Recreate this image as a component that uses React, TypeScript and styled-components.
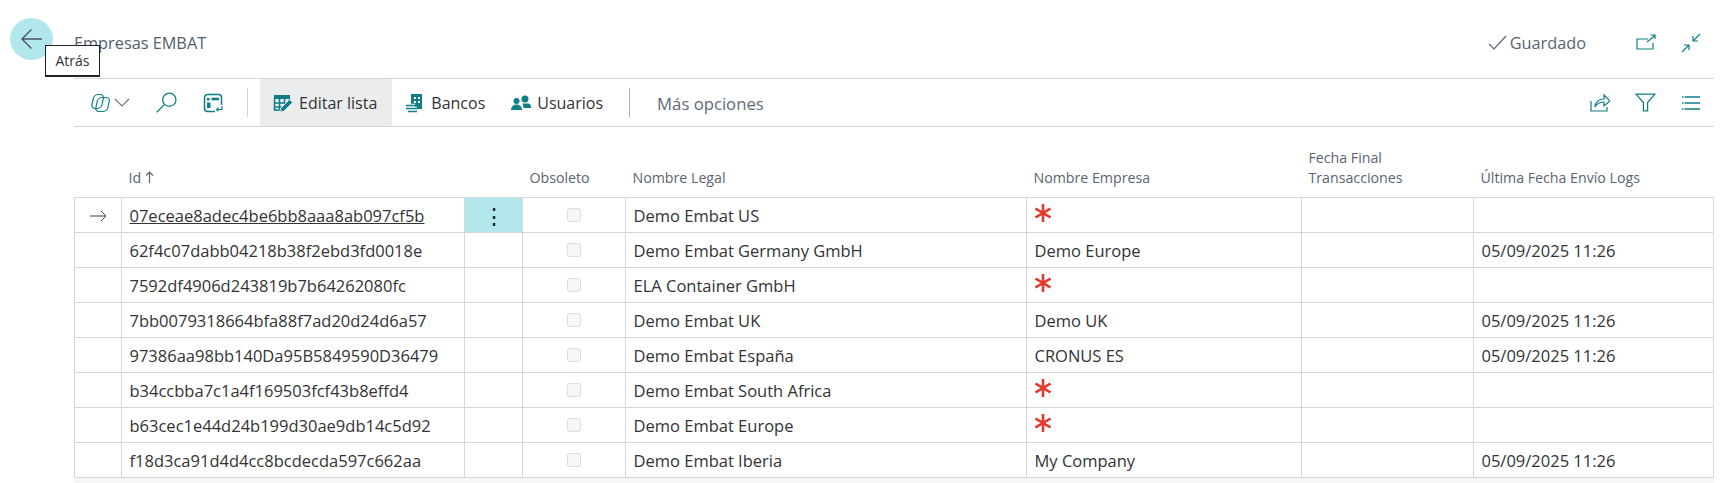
import React from "react";
import styled, { createGlobalStyle } from "styled-components";

const teal = "#0f7f85";

const GlobalStyle = createGlobalStyle`
    html, body {
        margin: 0;
        height: 483px;
        overflow: hidden;
        background: #ffffff;
    }
    body {
        font-family: "Open Sans", "Noto Sans", "Liberation Sans", sans-serif;
    }
`;

const rows = [
    { id: "07eceae8adec4be6bb8aaa8ab097cf5b", legal: "Demo Embat US", company: "", date: "", current: true },
    { id: "62f4c07dabb04218b38f2ebd3fd0018e", legal: "Demo Embat Germany GmbH", company: "Demo Europe", date: "05/09/2025 11:26" },
    { id: "7592df4906d243819b7b64262080fc", legal: "ELA Container GmbH", company: "", date: "" },
    { id: "7bb0079318664bfa88f7ad20d24d6a57", legal: "Demo Embat UK", company: "Demo UK", date: "05/09/2025 11:26" },
    { id: "97386aa98bb140Da95B5849590D36479", legal: "Demo Embat España", company: "CRONUS ES", date: "05/09/2025 11:26" },
    { id: "b34ccbba7c1a4f169503fcf43b8effd4", legal: "Demo Embat South Africa", company: "", date: "" },
    { id: "b63cec1e44d24b199d30ae9db14c5d92", legal: "Demo Embat Europe", company: "", date: "" },
    { id: "f18d3ca91d4d4cc8bcdecda597c662aa", legal: "Demo Embat Iberia", company: "My Company", date: "05/09/2025 11:26" },
];

const Icon = ({ size = 20, children }: { size?: number; children: React.ReactNode }) => (
    <svg width={size} height={size} viewBox="0 0 20 20" fill="none" stroke={teal} strokeWidth="1.2">
        {children}
    </svg>
);

const RequiredMark = () => (
    <svg width="16" height="18" viewBox="0 0 16 18" stroke="#e8372c" strokeWidth="2.6" aria-label="Obligatorio">
        <path d="M8 0v18M0.5 4.5l15 9M15.5 4.5l-15 9" />
    </svg>
);

export default function App() {
    return (
        <Page>
            <GlobalStyle />
            <BackButton aria-label="Atrás">
                <svg width="24" height="24" viewBox="0 0 24 24" fill="none" stroke="#4a5462" strokeWidth="1.4">
                    <path d="M22 12H2.5M11.5 2.5 2 12l9.5 9.5" />
                </svg>
            </BackButton>
            <Tooltip>Atrás</Tooltip>

            <TitleBar>
                <Title>Empresas EMBAT</Title>
                <Saved>
                    <svg width="19" height="16" viewBox="0 0 19 16" fill="none" stroke="#5a6472" strokeWidth="1.2">
                        <path d="M1 9l5 5L18 1" />
                    </svg>
                    Guardado
                </Saved>
                <TitleIcons>
                    <Icon>
                        <path d="M17 10v6H1V6h11" />
                        <path d="M11 9l8-6.5M14.5 2H19v4" />
                    </Icon>
                    <Icon>
                        <path d="M12 8l7-7M12 3v5h5" />
                        <path d="M8 12l-7 7M3 12h5v5" />
                    </Icon>
                </TitleIcons>
            </TitleBar>

            <Toolbar>
                <IconGroup>
                    <CopilotButton>
                        <Icon>
                            <rect x="4.5" y="1.5" width="10" height="14" rx="4" transform="skewX(-12)" />
                            <rect x="9" y="4.5" width="12" height="14" rx="4" transform="skewX(-12)" />
                        </Icon>
                        <svg width="16" height="9" viewBox="0 0 16 9" fill="none" stroke="#6b7480" strokeWidth="1.1">
                            <path d="M1 1l7 7 7-7" />
                        </svg>
                    </CopilotButton>
                    <Icon size={21}>
                        <circle cx="12.7" cy="7.3" r="6.3" />
                        <path d="M8 12L0.7 19.3" />
                    </Icon>
                    <Icon>
                        <path d="M12 18.5H4.5a3 3 0 0 1-3-3v-11a3 3 0 0 1 3-3h11a3 3 0 0 1 3 3V12" strokeWidth="1.5" />
                        <path d="M8.5 6H16" strokeWidth="2.6" />
                        <path d="M4 5h2.5v2.5H4zM4 9.5h3.5V15H4z" fill={teal} stroke="none" />
                        <path d="M19 13v3.5h-5M15.5 14.7L13.7 16.5l1.8 1.8" />
                    </Icon>
                </IconGroup>
                <VerticalRule />
                <ActionActive>
                    <Icon>
                        <path d="M1 2h16v4H1z" fill={teal} stroke="none" />
                        <path d="M1.5 6v11h8M6.5 6v10M11.5 6v5M16.5 6v3M1.5 10h10M1.5 14h7" strokeWidth="1.5" />
                        <path d="M7 19l1-4 8.5-8.5 3 3L11 18z" fill={teal} stroke="#ebecee" strokeWidth="0.8" />
                    </Icon>
                    Editar lista
                </ActionActive>
                <Action>
                    <Icon>
                        <path d="M6 1h11v15H6z" fill={teal} stroke="none" />
                        <path d="M9 5h2M13 5h2M9 9h2M13 9h2" stroke="#fff" strokeWidth="2" />
                        <path d="M1 12.5h9M1 15.5h11M3 18.5h9" stroke="#fff" strokeWidth="3.4" />
                        <path d="M1 12.5h9M1 15.5h11M3 18.5h9" strokeWidth="1.3" />
                    </Icon>
                    Bancos
                </Action>
                <Action>
                    <Icon>
                        <circle cx="5.5" cy="8" r="3" fill={teal} stroke="none" />
                        <circle cx="14" cy="6" r="3.5" fill={teal} stroke="none" />
                        <path d="M0 17c0-3 2-5.5 5.5-5.5s5.5 2.5 5.500 5.500z" fill={teal} stroke="none" />
                        <path d="M11.5 10.5H17c2 0 3 1.5 3 4v.5h-7.500c-.2-1.800-.5-3.200-1-4.500z" fill={teal} stroke="none" />
                    </Icon>
                    Usuarios
                </Action>
                <VerticalRule $dark />
                <MoreOptions>Más opciones</MoreOptions>
                <ToolbarEnd>
                    <Icon>
                        <path d="M1 8v10h16v-4" />
                        <path d="M5 14c0-5 4-8 9-8V2l6 6-6 5V9c-4 0-7 1-9 5z" />
                    </Icon>
                    <Icon size={21}>
                        <path d="M1 2h18l-7 8v8H8v-8z" />
                    </Icon>
                    <Icon>
                        <path d="M1 4h1.5M3.5 4H19M1 10h1.5M3.5 10H19M1 16h1.5M3.5 16H19" strokeWidth="1.4" />
                    </Icon>
                </ToolbarEnd>
            </Toolbar>

            <Table>
                <colgroup>
                    <col width={47} />
                    <col width={343} />
                    <col width={58} />
                    <col width={103} />
                    <col width={401} />
                    <col width={275} />
                    <col width={172} />
                    <col />
                </colgroup>
                <thead>
                    <tr>
                        <HeadCell />
                        <HeadCell>
                            Id{" "}
                            <svg width="9" height="12" viewBox="0 0 9 12" fill="none" stroke="#5a6472" strokeWidth="1.2">
                                <path d="M4.5 12V1M1 4.5l3.5-3.5L8 4.5" />
                            </svg>
                        </HeadCell>
                        <HeadCell />
                        <HeadCell>Obsoleto</HeadCell>
                        <HeadCell>Nombre Legal</HeadCell>
                        <HeadCell>Nombre Empresa</HeadCell>
                        <HeadCell>
                            Fecha Final
                            <br />
                            Transacciones
                        </HeadCell>
                        <HeadCell>Última Fecha Envío Logs</HeadCell>
                    </tr>
                </thead>
                <tbody>
                    {rows.map((row) => (
                        <tr key={row.id}>
                            <Cell $center>
                                {row.current && (
                                    <svg width="17" height="12" viewBox="0 0 17 12" fill="none" stroke="#444" strokeWidth="1">
                                        <path d="M0 6h16M11 1l5 5-5 5" />
                                    </svg>
                                )}
                            </Cell>
                            <Cell>{row.current ? <IdLink>{row.id}</IdLink> : row.id}</Cell>
                            <MenuCell $active={row.current}>{row.current && <Dots>⋮</Dots>}</MenuCell>
                            <Cell $center>
                                <Check />
                            </Cell>
                            <Cell>{row.legal}</Cell>
                            <Cell>
                                {row.company || (
                                    <MarkHolder>
                                        <RequiredMark />
                                    </MarkHolder>
                                )}
                            </Cell>
                            <Cell />
                            <Cell>{row.date}</Cell>
                        </tr>
                    ))}
                </tbody>
            </Table>
            <FooterBand />
        </Page>
    );
}

const Page = styled.main`
    position: relative;
    height: 483px;
    padding: 0 22px 0 74px;
    overflow: hidden;
`;

const BackButton = styled.div`
    position: absolute;
    left: 10px;
    top: 18px;
    width: 43px;
    height: 42px;
    border-radius: 50%;
    background: #b2e8ec;
    display: flex;
    align-items: center;
    justify-content: center;
`;

const Tooltip = styled.div`
    position: absolute;
    left: 45px;
    top: 45px;
    width: 55px;
    height: 32px;
    box-sizing: border-box;
    border: 1px solid #222;
    border-bottom-width: 2px;
    background: #fff;
    color: #333;
    font-size: 14px;
    line-height: 29px;
    text-align: center;
`;

const TitleBar = styled.header`
    display: flex;
    align-items: center;
    height: 79px;
    padding-top: 8px;
    box-sizing: border-box;
    border-bottom: 1px solid #d4d4da;
`;

const Title = styled.h1`
    margin: 0;
    flex: 1;
    font-size: 16.3px;
    font-weight: 400;
    color: #525d6c;
`;

const Saved = styled.div`
    display: flex;
    align-items: center;
    gap: 3px;
    font-size: 16.3px;
    color: #5a6472;
`;

const TitleIcons = styled.div`
    display: flex;
    gap: 25px;
    margin-left: 50px;
    margin-right: 13px;
`;

const Toolbar = styled.nav`
    display: flex;
    align-items: stretch;
    height: 47px;
    border-bottom: 1px solid #d4d4da;
`;

const IconGroup = styled.div`
    display: flex;
    align-items: center;
    gap: 26px;
    padding-left: 16px;
    margin-right: 24px;
`;

const CopilotButton = styled.div`
    display: flex;
    align-items: center;
    gap: 4px;
`;

const VerticalRule = styled.div<{ $dark?: boolean }>`
    width: 1px;
    height: 29px;
    align-self: center;
    background: ${(p) => (p.$dark ? "#a9afb8" : "#d4d4da")};
    margin-left: ${(p) => (p.$dark ? "13px" : "0")};
`;

const Action = styled.div`
    display: flex;
    align-items: center;
    gap: 6px;
    padding: 1px 13px 0;
    font-size: 16px;
    color: #333;
`;

const ActionActive = styled(Action)`
    margin-left: 12px;
    padding-right: 15px;
    background: #ebecee;
    border-radius: 2px;
`;

const MoreOptions = styled.div`
    display: flex;
    align-items: center;
    margin-top: 1px;
    margin-left: 27px;
    font-size: 16.7px;
    color: #5f6977;
`;

const ToolbarEnd = styled.div`
    display: flex;
    align-items: center;
    gap: 25px;
    margin-left: auto;
    margin-right: 13px;
`;

const Table = styled.table`
    width: 100%;
    margin-top: 1px;
    table-layout: fixed;
    border-collapse: collapse;
`;

const HeadCell = styled.th`
    height: 60px;
    padding: 0 0 9px 7px;
    vertical-align: bottom;
    text-align: left;
    font-size: 14.2px;
    line-height: 20px;
    font-weight: 400;
    color: #5a6472;
    white-space: nowrap;
`;

const Cell = styled.td<{ $center?: boolean }>`
    height: 34px;
    padding: ${(p) => (p.$center ? "0" : "0 0 0 7.5px")};
    border: 1px solid #d6d6db;
    font-size: 16.5px;
    color: #333;
    white-space: nowrap;
    overflow: hidden;
    text-align: ${(p) => (p.$center ? "center" : "left")};
`;

const MenuCell = styled(Cell)<{ $active?: boolean }>`
    padding: 0;
    text-align: center;
    background: ${(p) => (p.$active ? "#b2e8ec" : "transparent")};
`;

const Dots = styled.span`
    font-size: 22px;
    line-height: 30px;
    color: #222;
`;

const IdLink = styled.span`
    text-decoration: underline;
`;

const Check = styled.div`
    width: 14px;
    height: 14px;
    box-sizing: border-box;
    margin: 0 auto;
    border: 1px solid #dcdce0;
    border-radius: 3px;
    background: #f7f7f7;
`;

const MarkHolder = styled.div`
    display: flex;
    height: 34px;
    padding-bottom: 4px;
    box-sizing: border-box;
    align-items: center;
`;

const FooterBand = styled.div`
    height: 6px;
    background: #f5f6f7;
`;
